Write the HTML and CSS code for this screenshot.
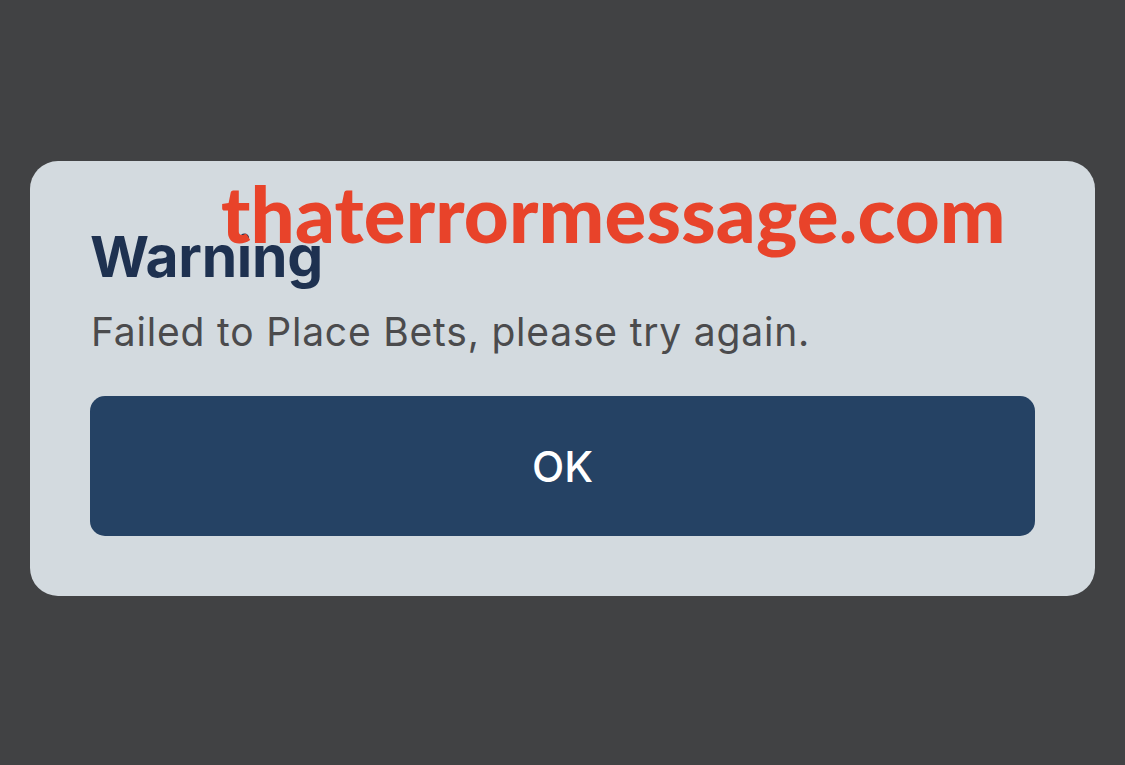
FILE: index.html
```html
<!DOCTYPE html>
<html>
<head>
<meta charset="utf-8">
<link rel="stylesheet" href="styles.css">
</head>
<body>
<div class="stage">
  <div class="card">
    <h1 class="title">Warning</h1>
    <p class="message">Failed to Place Bets, please try again.</p>
    <button class="ok">OK</button>
    <div class="watermark">thaterrormessage.com</div>
  </div>
</div>
</body>
</html>
```

FILE: styles.css
```css
html, body {
  margin: 0;
  padding: 0;
  background: #414244;
  width: 1125px;
  height: 765px;
  overflow: hidden;
}
.stage {
  padding: 161px 30px 0 30px;
}
.card {
  position: relative;
  box-sizing: border-box;
  width: 1065px;
  height: 435px;
  background: #d3dadf;
  border-radius: 28px;
  padding: 62px 60px 60px 60px;
  display: flex;
  flex-direction: column;
  font-family: Inter, "Noto Sans", sans-serif;
}
.title {
  margin: 0;
  font-size: 57px;
  line-height: 68px;
  font-weight: 700;
  color: #1e3150;
  letter-spacing: -0.3px;
}
.message {
  margin: 18px 0 0 1px;
  font-size: 39px;
  line-height: 46px;
  font-weight: 400;
  color: #4b4b4d;
  letter-spacing: 0.8px;
}
.ok {
  margin-top: auto;
  height: 140px;
  width: 100%;
  border: none;
  border-radius: 15px;
  background: #254264;
  color: #ffffff;
  font-family: Inter, "Noto Sans", sans-serif;
  font-size: 42px;
  font-weight: 500;
}
.watermark {
  position: absolute;
  left: 191px;
  top: 5px;
  font-family: Lato, sans-serif;
  font-weight: 900;
  font-size: 78px;
  color: #e8432a;
  letter-spacing: 0.15px;
}
```
